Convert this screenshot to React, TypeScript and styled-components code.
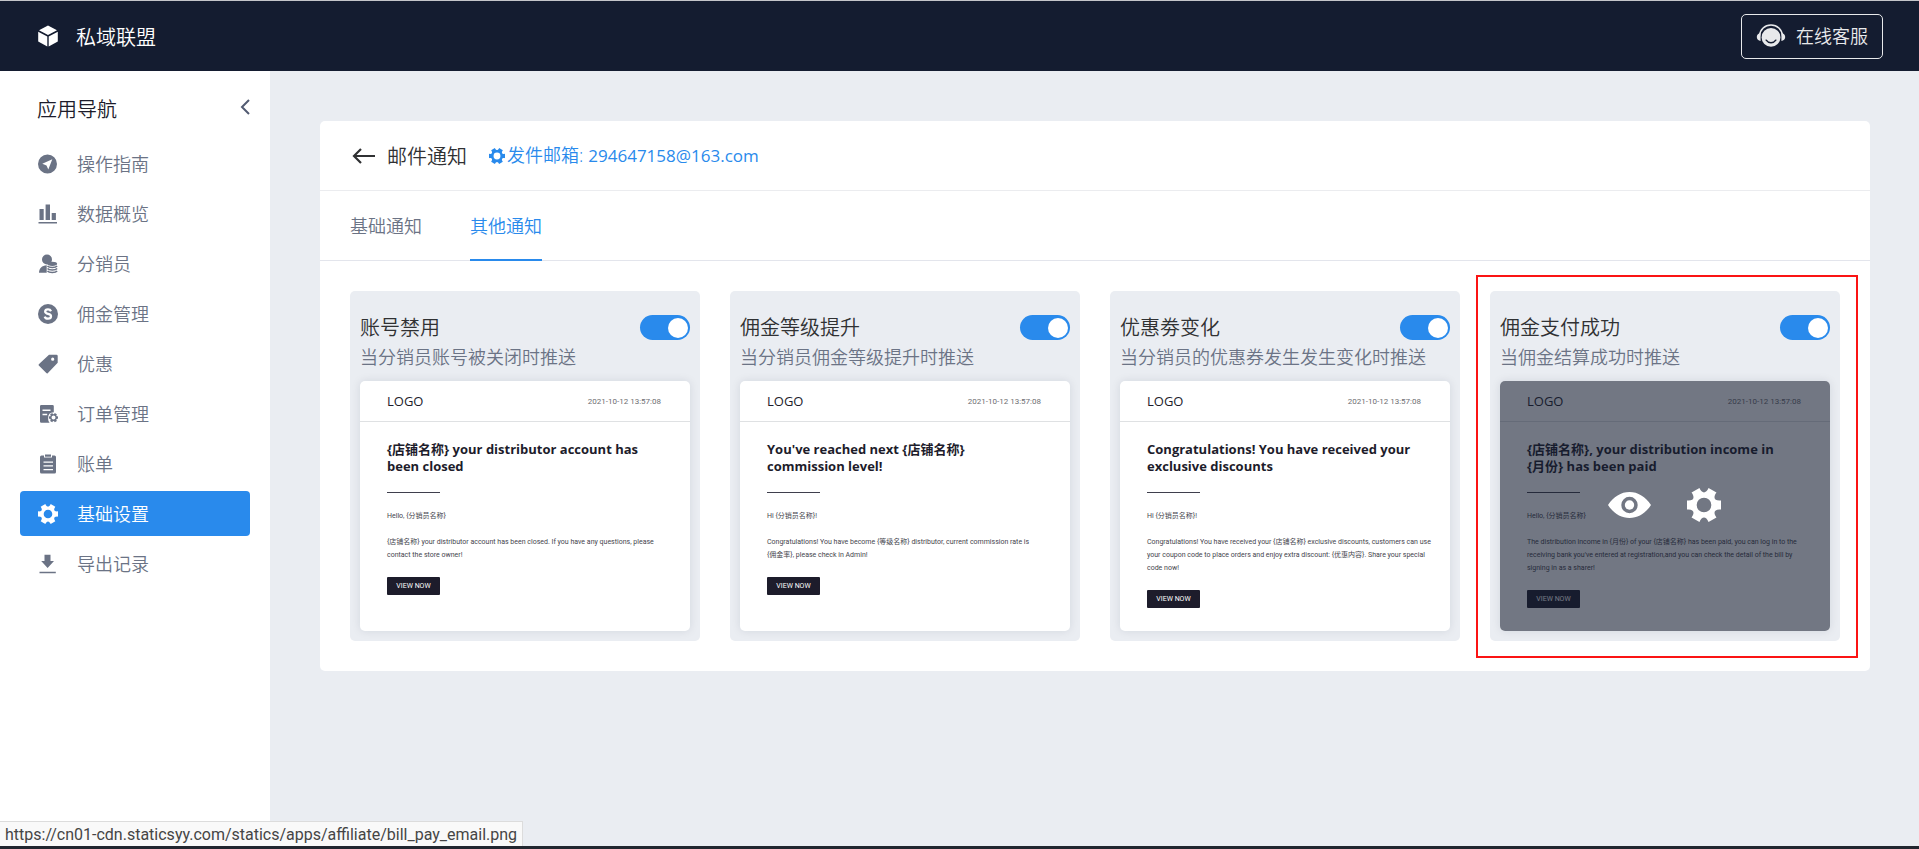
import React, { ReactNode } from 'react';
import styled, { createGlobalStyle, css } from 'styled-components';

const color = {
  navy: '#141c30',
  blue: '#298aec',
  grey: '#6b7385',
  dark: '#303133',
  ink: '#1d1c2b',
  page: '#eaedf2',
};

const GlobalStyle = createGlobalStyle`
  *, *::before, *::after { box-sizing: border-box; }
  body {
    margin: 0;
    background: ${color.page};
    color: ${color.dark};
    font-family: 'Open Sans', 'Noto Sans CJK SC', sans-serif;
    font-size: 18px;
    font-weight: 350;
  }
  button { font: inherit; color: inherit; cursor: pointer; }
  a { color: inherit; text-decoration: none; }
  h1, h2, h3, p { margin: 0; font-weight: inherit; }
`;

const Page = styled.div`
  display: flex;
  flex-direction: column;
  min-height: 100vh;
`;

const TopBar = styled.header`
  display: flex;
  align-items: center;
  justify-content: space-between;
  height: 71px;
  padding: 0 36px 0 38px;
  border-top: 1px solid #c4c5c9;
  background: ${color.navy};
  color: #fff;
`;

const Brand = styled.div`
  display: flex;
  align-items: center;
  gap: 18px;
  font-size: 20px;
`;

const ServiceButton = styled.button`
  display: flex;
  align-items: center;
  gap: 10px;
  height: 45px;
  padding: 0 14px;
  border: 1px solid #e8e9eb;
  border-radius: 5px;
  background: none;
  line-height: 24px;
  color: #e8e9eb;
`;

const Body = styled.div`
  display: flex;
  flex: 1;
`;

const SideBar = styled.aside`
  flex: none;
  width: 270px;
  padding: 20px;
  background: #fff;
`;

const SideHead = styled.div`
  display: flex;
  align-items: flex-start;
  justify-content: space-between;
  height: 50px;
  padding-left: 17px;
`;

const SideTitle = styled.h2`
  font-size: 20px;
  line-height: 38px;
  color: ${color.ink};
`;

const IconButton = styled.button`
  display: flex;
  padding: 0;
  border: 0;
  background: none;
`;

const CollapseButton = styled(IconButton)`
  padding-top: 8px;
  color: #525b72;
`;

const NavList = styled.nav`
  display: flex;
  flex-direction: column;
  gap: 5px;
`;

const NavItem = styled.a<{ $active: boolean }>`
  display: flex;
  align-items: center;
  gap: 19px;
  height: 45px;
  padding-left: 18px;
  border-radius: 4px;
  line-height: 24px;
  color: ${color.grey};
  ${(p) => p.$active && css`
    background: ${color.blue};
    color: #fff;
  `}
`;

const Main = styled.main`
  flex: 1;
  min-width: 0;
  padding: 50px 49px 50px 50px;
`;

const Panel = styled.section`
  border-radius: 5px;
  background: #fff;
`;

const PanelHead = styled.div`
  display: flex;
  align-items: center;
  height: 70px;
  padding: 0 32px;
  border-bottom: 1px solid #ebecef;
`;

const PanelTitle = styled.h1`
  margin: 0 22px 0 11px;
  font-size: 20px;
`;

const SenderLink = styled.a`
  display: flex;
  align-items: center;
  gap: 2px;
  line-height: 24px;
  color: ${color.blue};
`;

const Address = styled.span`
  margin-left: 5px;
  font-size: 17px;
  font-weight: 400;
`;

const Tabs = styled.div`
  display: flex;
  gap: 48px;
  height: 70px;
  padding: 0 30px;
  border-bottom: 1px solid #e3e5ec;
`;

const Tab = styled.button<{ $active: boolean }>`
  height: 70px;
  padding: 0;
  border: 0;
  border-bottom: 2px solid ${(p) => (p.$active ? color.blue : 'transparent')};
  background: none;
  color: ${(p) => (p.$active ? color.blue : color.grey)};
`;

const CardGrid = styled.div`
  display: grid;
  grid-template-columns: repeat(4, minmax(0, 1fr));
  gap: 30px;
  padding: 30px;
`;

const Card = styled.article`
  position: relative;
  padding: 21px 10px 10px;
  border-radius: 5px;
  background: ${color.page};
`;

const Highlight = styled.div`
  position: absolute;
  inset: -16px -18px -17px -14px;
  border: 2px solid #fb1414;
  pointer-events: none;
`;

const CardHead = styled.label`
  display: flex;
  align-items: center;
  justify-content: space-between;
  height: 31px;
  font-size: 20px;
  line-height: 30px;
`;

const CardNote = styled.p`
  margin-bottom: 10px;
  line-height: 28px;
  white-space: nowrap;
  color: ${color.grey};
`;

const Toggle = styled.input`
  appearance: none;
  display: flex;
  align-items: center;
  width: 50px;
  height: 25px;
  margin: 0;
  padding: 2px;
  border-radius: 13px;
  background: #c3c8d2;
  cursor: pointer;
  &::before {
    content: '';
    width: 20px;
    height: 20px;
    border-radius: 50%;
    background: #fff;
  }
  &:checked {
    justify-content: flex-end;
    background: ${color.blue};
  }
`;

const Mail = styled.div`
  position: relative;
  min-height: 250px;
  border-radius: 5px;
  background: #fff;
  box-shadow: 0 0 10px rgba(20, 28, 48, 0.1);
  overflow: hidden;
  font-weight: 400;
  color: ${color.ink};
`;

const MailHead = styled.div`
  display: flex;
  align-items: center;
  justify-content: space-between;
  height: 41px;
  padding: 0 29px 0 27px;
  border-bottom: 1px solid #dfe1e3;
  font-size: 13px;
`;

const MailDate = styled.time`
  font-family: Roboto, sans-serif;
  font-size: 8px;
  color: #6d6d72;
`;

const MailBody = styled.div`
  padding: 19px 20px 0 27px;
  font-family: Roboto, 'Noto Sans CJK SC', sans-serif;
  font-size: 7px;
  line-height: 13px;
  color: #45454d;
  white-space: nowrap;
`;

const MailTitle = styled.h3`
  font-family: 'Open Sans', 'Noto Sans CJK SC', sans-serif;
  font-size: 13px;
  font-weight: 700;
  line-height: 17px;
  color: ${color.ink};
`;

const MailRule = styled.hr`
  width: 53px;
  height: 1px;
  margin: 17px 0;
  border: 0;
  background: #3f3f4d;
`;

const MailText = styled.p`
  margin-top: 13px;
`;

const MailAction = styled.button`
  display: block;
  width: 53px;
  height: 18px;
  margin-top: 15px;
  padding: 0;
  border: 0;
  border-radius: 1px;
  background: ${color.ink};
  color: #fff;
`;

const MailOverlay = styled.div`
  position: absolute;
  inset: 0;
  display: flex;
  align-items: center;
  justify-content: center;
  gap: 36px;
  padding: 0 2px 2px 0;
  background: rgba(20, 28, 48, 0.6);
  color: #fff;
`;

const StatusBubble = styled.output`
  position: fixed;
  left: 0;
  bottom: 3px;
  height: 25px;
  padding: 0 5px;
  border: 1px solid #dcdcdc;
  border-width: 1px 1px 0 0;
  background: #f9f9f9;
  font-family: Roboto, sans-serif;
  font-size: 16px;
  font-weight: 400;
  line-height: 25px;
  color: #454545;
`;

const BottomEdge = styled.div`
  height: 3px;
  background: #21262f;
`;

type IconProps = { width?: number; height?: number; box?: string; children: ReactNode };
const Icon = ({ width = 20, height = width, box = '0 0 20 20', children }: IconProps) => (
  <svg width={width} height={height} viewBox={box} fill="currentColor" aria-hidden="true">
    {children}
  </svg>
);

const GearShape = ({ transform }: { transform?: string }) => (
  <path
    transform={transform}
    fillRule="evenodd"
    d="M23.6 15.1C19.2 14.6 17.9 16.9 20.5 20.5L15.1 23.6C13.3 19.6 10.7 19.6 8.9 23.6L3.5 20.5C6.1 16.9 4.8 14.6.4 15.1V8.9C4.8 9.4 6.1 7.1 3.5 3.5L8.9.4C10.7 4.4 13.3 4.4 15.1.4L20.5 3.5C17.9 7.1 19.2 9.4 23.6 8.9ZM12 7a5 5 0 1 0 0 10 5 5 0 0 0 0-10Z"
  />
);

const GearIcon = ({ size }: { size: number }) => (
  <Icon width={size} box="0.4 0.4 23.2 23.2">
    <GearShape />
  </Icon>
);

const CubeIcon = () => (
  <Icon width={20} height={22} box="0 0 20 22">
    <path d="M10 .5 19 5.2 10 10 1 5.2ZM.2 6.7 9.3 11.5V21.5L.2 16.6ZM19.8 6.7V16.6L10.7 21.5V11.5Z" />
  </Icon>
);

const ServiceIcon = () => (
  <Icon width={30} height={24} box="0 0 30 24">
    <circle cx="15" cy="13.400" r="9.400" />
    <path d="M3.200 12.500C4 5.200 9 1 15 1S26 5.200 26.800 12.500" fill="none" stroke="currentColor" strokeWidth="1.6" />
    <path d="M4.600 9.300v7.600C2.400 16.800.8 15.400.8 13.100S2.400 9.400 4.600 9.300ZM25.400 9.300v7.600c2.200-.1 3.800-1.500 3.800-3.800s-1.600-3.700-3.800-3.800Z" />
    <path d="M10.200 16.200c2.300 3.400 7.300 3.400 9.600 0" fill="none" stroke={color.navy} strokeWidth="1.5" strokeLinecap="round" />
  </Icon>
);

const EyeIcon = () => (
  <Icon width={43} height={26} box="0 0 43 26">
    <path
      fillRule="evenodd"
      d="M0 13C5.500 4.700 13 0 21.500 0S37.500 4.700 43 13C37.500 21.300 30 26 21.500 26S5.500 21.300 0 13ZM21.500 4.800a8.200 8.200 0 1 0 0 16.400 8.200 8.200 0 0 0 0-16.400Z"
    />
    <circle cx="21.5" cy="13" r="4.7" />
  </Icon>
);

const ArrowLeftIcon = () => (
  <Icon width={24} height={18} box="0 0 24 18">
    <path d="M9 2 2 9l7 7M2 9h21" fill="none" stroke="currentColor" strokeWidth="2.2" />
  </Icon>
);

const ChevronIcon = () => (
  <Icon width={10} height={16} box="0 0 10 16">
    <path d="M9 1 2 8l7 7" fill="none" stroke="currentColor" strokeWidth="2" />
  </Icon>
);

const navItems: { label: string; icon: ReactNode; active?: boolean }[] = [
  {
    label: '操作指南',
    icon: (
      <Icon>
        <path fillRule="evenodd" d="M9.500.500a9.500 9.500 0 1 0 0 19 9.500 9.500 0 0 0 0-19ZM14.300 5.200 10.300 15.500 8.500 11.400 4.300 9.800Z" />
      </Icon>
    ),
  },
  {
    label: '数据概览',
    icon: (
      <Icon>
        <path d="M1.500 5h4.200v11H1.500ZM7.600.500h4.400V16H7.600ZM13.700 9h4.200v7h-4.200ZM.500 18h18.500v1.600H.500Z" />
      </Icon>
    ),
  },
  {
    label: '分销员',
    icon: (
      <Icon>
        <circle cx="9" cy="5.500" r="5" />
        <path d="M1 18.800C1 14.500 4 11.500 8.700 11.300V18.800Z" />
        <ellipse cx="14.300" cy="9.800" rx="4.800" ry="2.100" />
        <path d="M9.500 12c1.500 2 8.100 2 9.600 0M9.500 14.500c1.500 2 8.100 2 9.600 0M9.500 17c1.500 2 8.100 2 9.600 0" fill="none" stroke="currentColor" strokeWidth="1.5" />
      </Icon>
    ),
  },
  {
    label: '佣金管理',
    icon: (
      <Icon>
        <circle cx="10" cy="10" r="10" />
        <path d="M13 7.200C12.400 5.900 11.300 5.400 10 5.400 8.400 5.400 7.200 6.200 7.200 7.600c0 3.200 5.800 1.500 5.800 4.700 0 1.500-1.300 2.400-3 2.400-1.600 0-2.800-.7-3.300-2.100" fill="none" stroke="#fff" strokeWidth="2.3" />
      </Icon>
    ),
  },
  {
    label: '优惠',
    icon: (
      <Icon>
        <path fillRule="evenodd" d="M11 .700h7.500q1.200 0 1.200 1.200V8.700L9.700 19.200Q9 19.700 8.300 19L.8 11.600Q.3 11 .8 10.300ZM14.700 3.600a1.600 1.600 0 1 0 0 3.200 1.600 1.600 0 0 0 0-3.200Z" />
      </Icon>
    ),
  },
  {
    label: '订单管理',
    icon: (
      <Icon>
        <path fillRule="evenodd" d="M3.300 1h11.200q1.300 0 1.300 1.300V8.200Q10 8.500 10 14q0 2.800 1.600 4.800H3.300Q2 18.800 2 17.500V2.300Q2 1 3.300 1ZM4.500 5.400v1.600h8V5.400ZM4.500 9.700v1.600h4.700V9.700Z" />
        <GearShape transform="translate(10.700 8.800) scale(.4)" />
      </Icon>
    ),
  },
  {
    label: '账单',
    icon: (
      <Icon>
        <path fillRule="evenodd" d="M3.500 1.500H6V3.500h8V1.500h2.500q1.500 0 1.500 1.500v15q0 1.500-1.500 1.500h-13Q2 19.500 2 18V3Q2 1.500 3.500 1.500ZM5.500 7.400v1.300h9.500V7.400ZM5.500 11.200v1.300h9.500v-1.300ZM5.500 15v1.300h9.500V15Z" />
        <path d="M7 .500h6v2.200H7Z" />
      </Icon>
    ),
  },
  { label: '基础设置', icon: <GearIcon size={20} />, active: true },
  {
    label: '导出记录',
    icon: (
      <Icon>
        <path d="M6.500.800h6V7H16L9.600 14 3.200 7H6.500ZM1.500 17.700h16.300v1.600H1.500Z" />
      </Icon>
    ),
  },
];

type Notice = {
  name: string;
  note: string;
  title: string[];
  greeting: string;
  text: string[];
  selected?: boolean;
};

const notices: Notice[] = [
  {
    name: '账号禁用',
    note: '当分销员账号被关闭时推送',
    title: ['{店铺名称} your distributor account has', 'been closed'],
    greeting: 'Hello, {分销员名称}',
    text: ['{店铺名称} your distributor account has been closed. If you have any questions, please', 'contact the store owner!'],
  },
  {
    name: '佣金等级提升',
    note: '当分销员佣金等级提升时推送',
    title: ["You've reached next {店铺名称}", 'commission level!'],
    greeting: 'Hi {分销员名称}!',
    text: ['Congratulations! You have become {等级名称} distributor, current commission rate is', '{佣金率}, please check in Admin!'],
  },
  {
    name: '优惠劵变化',
    note: '当分销员的优惠券发生发生变化时推送',
    title: ['Congratulations! You have received your', 'exclusive discounts'],
    greeting: 'Hi {分销员名称}!',
    text: [
      'Congratulations! You have received your {店铺名称} exclusive discounts, customers can use',
      'your coupon code to place orders and enjoy extra discount: {优惠内容}. Share your special',
      'code now!',
    ],
  },
  {
    name: '佣金支付成功',
    note: '当佣金结算成功时推送',
    title: ['{店铺名称}, your distribution income in', '{月份} has been paid'],
    greeting: 'Hello, {分销员名称}',
    text: [
      'The distribution income in {月份} of your {店铺名称} has been paid, you can log in to the',
      "receiving bank you've entered at registration,and you can check the detail of the bill by",
      'signing in as a sharer!',
    ],
    selected: true,
  },
];

const Lines = ({ lines }: { lines: string[] }) => (
  <>
    {lines.map((line, i) => (
      <React.Fragment key={line}>
        {i > 0 && <br />}
        {line}
      </React.Fragment>
    ))}
  </>
);

const NoticeCard = ({ notice }: { notice: Notice }) => (
  <Card>
    <CardHead>
      {notice.name}
      <Toggle type="checkbox" role="switch" defaultChecked />
    </CardHead>
    <CardNote>{notice.note}</CardNote>
    <Mail>
      <MailHead>
        <span>LOGO</span>
        <MailDate>2021-10-12 13:57:08</MailDate>
      </MailHead>
      <MailBody>
        <MailTitle><Lines lines={notice.title} /></MailTitle>
        <MailRule />
        <p>{notice.greeting}</p>
        <MailText><Lines lines={notice.text} /></MailText>
        <MailAction type="button">VIEW NOW</MailAction>
      </MailBody>
      {notice.selected && (
        <MailOverlay>
          <IconButton type="button" aria-label="预览"><EyeIcon /></IconButton>
          <IconButton type="button" aria-label="设置"><GearIcon size={34} /></IconButton>
        </MailOverlay>
      )}
    </Mail>
    {notice.selected && <Highlight />}
  </Card>
);

export default function App() {
  return (
    <Page>
      <GlobalStyle />
      <TopBar>
        <Brand><CubeIcon />私域联盟</Brand>
        <ServiceButton type="button"><ServiceIcon />在线客服</ServiceButton>
      </TopBar>
      <Body>
        <SideBar>
          <SideHead>
            <SideTitle>应用导航</SideTitle>
            <CollapseButton type="button" aria-label="收起"><ChevronIcon /></CollapseButton>
          </SideHead>
          <NavList>
            {navItems.map((item) => (
              <NavItem key={item.label} href="#" $active={!!item.active}>
                {item.icon}
                {item.label}
              </NavItem>
            ))}
          </NavList>
        </SideBar>
        <Main>
          <Panel>
            <PanelHead>
              <IconButton type="button" aria-label="返回"><ArrowLeftIcon /></IconButton>
              <PanelTitle>邮件通知</PanelTitle>
              <SenderLink href="#">
                <GearIcon size={16} />
                <span>发件邮箱:<Address>294647158@163.com</Address></span>
              </SenderLink>
            </PanelHead>
            <Tabs role="tablist">
              <Tab type="button" role="tab" aria-selected={false} $active={false}>基础通知</Tab>
              <Tab type="button" role="tab" aria-selected $active>其他通知</Tab>
            </Tabs>
            <CardGrid>
              {notices.map((notice) => <NoticeCard key={notice.name} notice={notice} />)}
            </CardGrid>
          </Panel>
        </Main>
      </Body>
      <StatusBubble>https://cn01-cdn.staticsyy.com/statics/apps/affiliate/bill_pay_email.png</StatusBubble>
      <BottomEdge />
    </Page>
  );
}
